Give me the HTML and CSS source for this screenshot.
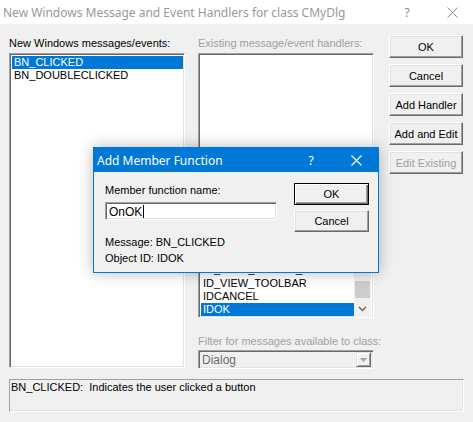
FILE: index.html
```html
<!DOCTYPE html>
<html>
<head>
<meta charset="utf-8">
<link rel="stylesheet" href="styles.css">
</head>
<body>
<div class="window">
  <div class="titlebar">
    <span class="title-text">New Windows Message and Event Handlers for class CMyDlg</span>
    <span class="title-help">?</span>
    <span class="title-close"><svg width="11" height="11" viewBox="0 0 11 11"><path d="M0.5 0.5 L10.5 10.5 M10.5 0.5 L0.5 10.5" stroke="#8a8a8a" stroke-width="1" fill="none"/></svg></span>
  </div>
  <div class="client">
    <div class="columns">
      <div class="col col-left">
        <div class="label">New Windows messages/events:</div>
        <div class="listbox list-new">
          <div class="row selected">BN_CLICKED</div>
          <div class="row">BN_DOUBLECLICKED</div>
        </div>
      </div>
      <div class="col col-mid">
        <div class="label disabled">Existing message/event handlers:</div>
        <div class="listbox list-existing"></div>
        <div class="spacer"></div>
        <div class="listbox list-objects">
          <div class="obj-rows">
            <div class="row partial">ID_VIEW_STATUS_BAR</div>
            <div class="row">ID_VIEW_TOOLBAR</div>
            <div class="row">IDCANCEL</div>
            <div class="row selected">IDOK</div>
          </div>
          <div class="scrollbar">
            <div class="sb-arrow"></div>
            <div class="sb-track"><div class="sb-thumb"></div></div>
            <div class="sb-arrow"><svg width="9" height="6" viewBox="0 0 9 6"><path d="M1 1 L4.5 4.5 L8 1" stroke="#606060" stroke-width="1.4" fill="none"/></svg></div>
          </div>
        </div>
        <div class="label disabled filter-label">Filter for messages available to class:</div>
        <div class="combo">
          <span class="combo-text">Dialog</span>
          <span class="combo-btn"><svg width="7" height="4" viewBox="0 0 7 4"><path d="M0 0 L7 0 L3.5 4 Z" fill="#a0a0a0"/></svg></span>
        </div>
      </div>
      <div class="col col-right">
        <button class="btn">OK</button>
        <button class="btn">Cancel</button>
        <button class="btn">Add Handler</button>
        <button class="btn">Add and Edit</button>
        <button class="btn btn-disabled">Edit Existing</button>
      </div>
    </div>
    <div class="status">BN_CLICKED:&nbsp; Indicates the user clicked a button</div>

    <div class="popup">
      <div class="popup-title">
        <span class="popup-title-text">Add Member Function</span>
        <span class="popup-help">?</span>
        <span class="popup-close"><svg width="11" height="11" viewBox="0 0 11 11"><path d="M0.5 0.5 L10.5 10.5 M10.5 0.5 L0.5 10.5" stroke="#ffffff" stroke-width="1.1" fill="none"/></svg></span>
      </div>
      <div class="popup-body">
        <div class="popup-left">
          <div class="plabel">Member function name:</div>
          <div class="textbox"><span>OnOK</span><span class="caret"></span></div>
          <div class="plabel info1">Message: BN_CLICKED</div>
          <div class="plabel info2">Object ID: IDOK</div>
        </div>
        <div class="popup-right">
          <button class="btn pbtn default">OK</button>
          <button class="btn pbtn">Cancel</button>
        </div>
      </div>
    </div>
  </div>
</div>
</body>
</html>
```
FILE: styles.css
```css
html, body {
  margin: 0;
  padding: 0;
}
body {
  width: 473px;
  height: 422px;
  overflow: hidden;
  background: #f0f0f0;
  font-family: "Liberation Sans", Arial, sans-serif;
  font-size: 11px;
  color: #000;
}
.window {
  width: 473px;
  height: 422px;
  display: flex;
  flex-direction: column;
}
.titlebar {
  height: 24px;
  background: #ffffff;
  display: flex;
  align-items: center;
  padding-left: 3px;
  font-family: "Noto Sans", sans-serif;
  font-size: 12px;
  color: #999999;
}
.title-text {
  flex: 1;
  white-space: nowrap;
}
.title-help {
  width: 10px;
  text-align: center;
  color: #8a8a8a;
  margin-right: 35px;
}
.title-close {
  display: flex;
  width: 11px;
  margin-right: 15px;
}
.client {
  flex: 1;
  position: relative;
  background: #f0f0f0;
  padding: 11px 0 0 9px;
}
.columns {
  display: flex;
  gap: 13px;
}
.col {
  display: flex;
  flex-direction: column;
}
.col-left, .col-mid {
  width: 176px;
}
.col-right {
  width: 74px;
  margin-left: 2px;
  gap: 6px;
}
.label {
  height: 13px;
  line-height: 13px;
  margin-top: 2px;
  margin-bottom: 3px;
  white-space: nowrap;
}
.disabled {
  color: #a0a0a0;
}
.listbox {
  box-sizing: border-box;
  background: #ffffff;
  border-style: solid;
  border-width: 1px;
  border-color: #a0a0a0 #ffffff #ffffff #a0a0a0;
  box-shadow: inset 1px 1px 0 #696969, inset -1px -1px 0 #e3e3e3;
  padding: 2px 1px 1px 2px;
  overflow: hidden;
}
.list-new {
  height: 315px;
}
.row {
  height: 13px;
  line-height: 13px;
  padding-left: 2px;
  white-space: nowrap;
}
.row.partial {
  line-height: 11px;
}
.row.selected {
  background: #0078d7;
  color: #ffffff;
}
.list-existing {
  height: 147px;
}
.spacer {
  height: 20px;
}
.list-objects {
  height: 98px;
  display: flex;
  padding: 2px 2px 1px 2px;
}
.obj-rows {
  flex: 1;
  display: flex;
  flex-direction: column;
  justify-content: flex-end;
  overflow: hidden;
}
.scrollbar {
  width: 17px;
  display: flex;
  flex-direction: column;
  background: #f0f0f0;
  margin: -2px 0 -1px 0;
}
.sb-arrow {
  height: 17px;
  display: flex;
  align-items: center;
  justify-content: center;
}
.sb-track {
  flex: 1;
  display: flex;
  flex-direction: column;
  justify-content: flex-end;
  padding: 0 1px 2px 1px;
}
.sb-thumb {
  height: 17px;
  background: #cdcdcd;
}
.filter-label {
  margin-top: 17px;
  margin-bottom: 2px;
}
.combo {
  box-sizing: border-box;
  height: 19px;
  display: flex;
  align-items: center;
  border-style: solid;
  border-width: 1px;
  border-color: #a0a0a0 #ffffff #ffffff #a0a0a0;
  box-shadow: inset 1px 1px 0 #696969, inset -1px -1px 0 #e3e3e3;
  padding: 2px 2px 2px 3px;
  color: #6d6d6d;
}
.combo-text {
  flex: 1;
  font-size: 12px;
}
.combo-btn {
  box-sizing: border-box;
  width: 15px;
  height: 15px;
  display: flex;
  align-items: center;
  justify-content: center;
  background: #f0f0f0;
  border-style: solid;
  border-width: 1px;
  border-color: #e3e3e3 #696969 #696969 #e3e3e3;
  box-shadow: inset 1px 1px 0 #ffffff, inset -1px -1px 0 #a0a0a0;
}
.btn {
  box-sizing: border-box;
  height: 23px;
  width: 74px;
  margin: 0;
  padding: 0;
  font-family: "Liberation Sans", Arial, sans-serif;
  font-size: 11px;
  color: #000;
  background: #f0f0f0;
  border-style: solid;
  border-width: 1px;
  border-color: #ffffff #696969 #696969 #ffffff;
  box-shadow: inset -1px -1px 0 #a0a0a0, inset 1px 1px 0 #e3e3e3;
  text-align: center;
}
.btn-disabled {
  color: #a0a0a0;
}
.status {
  box-sizing: border-box;
  width: 455px;
  height: 33px;
  margin-top: 10px;
  border-style: solid;
  border-width: 1px;
  border-color: #a0a0a0 #ffffff #ffffff #a0a0a0;
  box-shadow: inset -1px -1px 0 #e3e3e3;
  padding: 1px 0 0 1px;
  line-height: 13px;
  white-space: nowrap;
}

/* popup dialog */
.popup {
  position: absolute;
  left: 93px;
  top: 123px;
  width: 286px;
  height: 126px;
  box-sizing: border-box;
  border: 1px solid #0078d7;
  background: #f0f0f0;
  box-shadow: 0 0 14px rgba(0, 0, 0, 0.28);
  display: flex;
  flex-direction: column;
}
.popup-title {
  height: 24px;
  background: #0078d7;
  color: #ffffff;
  display: flex;
  align-items: center;
  padding-left: 3px;
  font-family: "Noto Sans", sans-serif;
  font-size: 12px;
}
.popup-title-text {
  flex: 1;
  white-space: nowrap;
}
.popup-help {
  width: 10px;
  text-align: center;
  margin-right: 35px;
}
.popup-close {
  display: flex;
  width: 11px;
  margin-right: 16px;
}
.popup-body {
  flex: 1;
  display: flex;
  gap: 17px;
  padding-left: 11px;
}
.popup-left {
  width: 172px;
  display: flex;
  flex-direction: column;
  padding-top: 12px;
}
.plabel {
  height: 13px;
  line-height: 13px;
  white-space: nowrap;
}
.textbox {
  box-sizing: border-box;
  margin-top: 5px;
  height: 18px;
  background: #ffffff;
  border-style: solid;
  border-width: 1px;
  border-color: #a0a0a0 #ffffff #ffffff #a0a0a0;
  box-shadow: inset 1px 1px 0 #696969, inset -1px -1px 0 #e3e3e3;
  padding: 1px 0 0 3px;
  display: flex;
  align-items: center;
  font-size: 12px;
}
.caret {
  width: 1px;
  height: 13px;
  background: #000;
  margin-left: 1px;
}
.info1 {
  margin-top: 16px;
}
.info2 {
  margin-top: 3px;
}
.popup-right {
  display: flex;
  flex-direction: column;
  gap: 5px;
  padding-top: 11px;
}
.pbtn {
  width: 75px;
  height: 22px;
}
.pbtn.default {
  border: 1px solid #000;
  box-shadow: inset 1px 1px 0 #ffffff, inset -1px -1px 0 #696969, inset -2px -2px 0 #a0a0a0;
}
```
